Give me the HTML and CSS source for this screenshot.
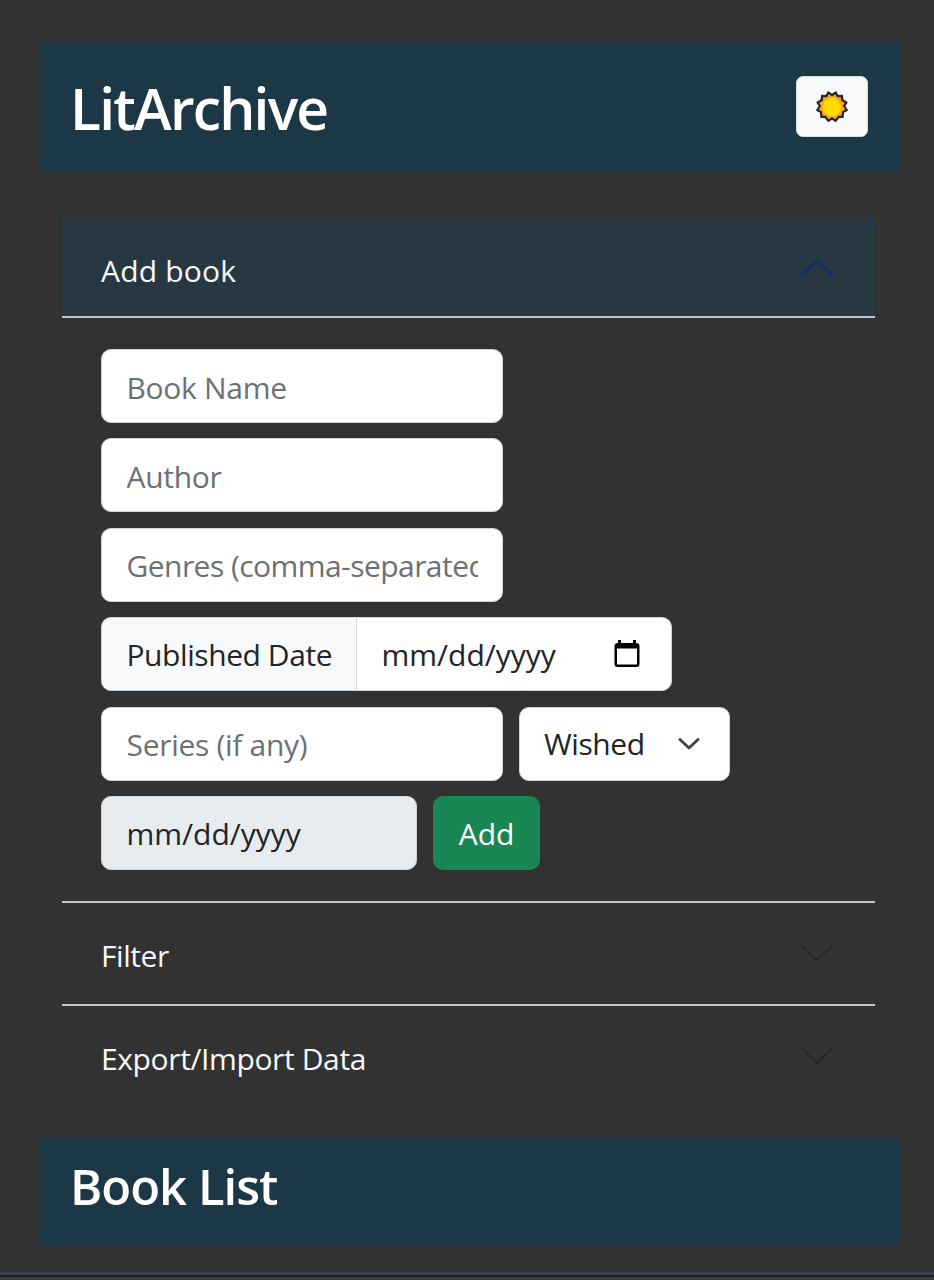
FILE: index.html
```html
<!DOCTYPE html>
<html lang="en">
<head>
<meta charset="utf-8">
<title>LitArchive</title>
<link rel="stylesheet" href="styles.css">
</head>
<body>
<div class="page">
  <header class="banner">
    <h1 class="brand">LitArchive</h1>
    <button class="theme" aria-label="Toggle theme">
      <svg width="34" height="34" viewBox="-17 -17 34 34"><path class="sun" d="M0-12L3.700-14.500L5.600-11L9.900-11.200L10.300-7L14.300-4.500L12.200-1L14.700 3L11 5.100L10.600 9.800L6.600 9.800L3.700 13.800L0 11.500L-3.700 13.800L-6.600 9.800L-10.600 9.800L-11 5.100L-14.700 3L-12.200-1L-14.300-4.500L-10.300-7L-9.900-11.200L-5.600-11L-3.700-14.500Z"/><circle class="disc" r="9.200"/></svg>
    </button>
  </header>
  <main class="accordion">
    <section class="item">
      <div class="head head-open"><span class="t-add">Add book</span>
        <svg class="chev" width="34" height="20" viewBox="0 0 34 20"><path class="up" d="M2 17L17 3L32 17"/></svg>
      </div>
      <form class="form">
        <div class="row"><input class="field t-name" placeholder="Book Name"></div>
        <div class="row"><input class="field t-author" placeholder="Author"></div>
        <div class="row"><input class="field t-genres" placeholder="Genres (comma-separated)"></div>
        <div class="row group">
          <span class="label">Published Date</span>
          <span class="date"><span>mm/dd/yyyy</span>
            <svg width="26" height="30" viewBox="0 0 26 30"><path d="M4 1h3v3h12V1h3v3q3.500 0 3.500 3v18q0 3-3 3h-19q-3 0-3-3V7q0-3 3.500-3zM3 9.500v16h20V9.500z" fill="#000" fill-rule="evenodd"/></svg>
          </span>
        </div>
        <div class="row"><input class="field t-series" placeholder="Series (if any)">
          <span class="select"><span class="t-wish">Wished</span>
            <svg width="22" height="14" viewBox="0 0 22 14"><path class="caret" d="M2 2.500L11 11L20 2.500"/></svg>
          </span>
        </div>
        <div class="row"><span class="disabled">mm/dd/yyyy</span><button class="add" type="button">Add</button></div>
      </form>
    </section>
    <section class="item">
      <div class="head"><span class="t-filter">Filter</span>
        <svg class="chev" width="34" height="20" viewBox="0 0 34 20"><path class="down" d="M2 3L17 17L32 3"/></svg>
      </div>
    </section>
    <section class="item">
      <div class="head"><span class="t-export">Export/Import Data</span>
        <svg class="chev" width="34" height="20" viewBox="0 0 34 20"><path class="down" d="M2 3L17 17L32 3"/></svg>
      </div>
    </section>
  </main>
  <section class="list"><h2 class="list-title">Book List</h2></section>
  <div class="edge"></div>
</div>
</body>
</html>
```
FILE: styles.css
```css
* { box-sizing: border-box; }
body { margin: 0; background: #323232; font: 30px/46px "Open Sans", sans-serif; color: #f8f9fa; }
svg { display: block; flex: none; }
span { white-space: nowrap; }
.page { height: 1280px; padding-top: 41px; overflow: hidden; display: flex; flex-direction: column; }
.banner { height: 130px; flex: none; margin: 0 35px 0 39px; padding: 0 31px 0 31px; background: #1c3745; display: flex; align-items: center; justify-content: space-between; }
.brand { margin: 4px 0 0; font-size: 57px; line-height: 68px; font-weight: 600; color: #fff; letter-spacing: -1.8px; }
.theme { width: 72px; height: 61px; padding: 2px 0 0; border: 1px solid #d5dadd; border-radius: 7px; background: #f8f9fa; display: flex; align-items: center; justify-content: center; }
.sun { fill: #f7a51c; stroke: #252525; stroke-width: 2.2; }
.disc { fill: #ffdc00; }
.accordion { margin: 47px 59px 0 62px; height: 872px; flex: none; }
.item + .item { border-top: 2px solid #c4c7c9; }
.head { height: 101px; padding: 5px 41px 0 39px; display: flex; align-items: center; justify-content: space-between; }
.head-open { height: 100px; padding-top: 8px; background: #273842; border-bottom: 2px solid #bfc7ce; }
.chev { margin-top: -7px; }
.up, .down, .caret { fill: none; stroke-linecap: round; stroke-linejoin: round; }
.up { stroke: #12315f; stroke-width: 3.5; }
.down { stroke: #252829; stroke-width: 2.2; }
.caret { stroke: #41464b; stroke-width: 3; }
.form { height: 583px; padding: 31px 39px 0; display: flex; flex-direction: column; gap: 15.4px; }
.row { display: flex; gap: 16px; height: 74px; }
.field, .group, .select, .disabled { border: 1px solid #cfd4d9; border-radius: 10px; background: #fff; color: #212529; }
.field { width: 402px; padding: 3px 24px 0 24.5px; font: inherit; }
.field::placeholder { color: #6c7075; opacity: 1; }
.group { width: 571px; gap: 0; overflow: hidden; }
.label { width: 255px; padding: 14px 0 0 24.5px; background: #f8f9fa; border-right: 1px solid #d9dde1; letter-spacing: -0.43px; }
.date { flex: 1; display: flex; align-items: center; justify-content: space-between; padding: 2px 31px 0 24.5px; }
.date svg { margin-top: -2px; }
.select { width: 211px; padding: 1px 29px 0 24px; display: flex; align-items: center; justify-content: space-between; }
.disabled { width: 316px; padding: 14px 0 0 24.5px; background: #e9ecef; }
.add { width: 107px; border: 0; border-radius: 10px; background: #198754; color: #fff; font: inherit; padding: 2px 0 0; }
.t-add { letter-spacing: 0.2px; }
.t-name { letter-spacing: -0.3px; }
.t-author { letter-spacing: -0.3px; }
.t-genres { letter-spacing: -0.55px; }
.t-series { letter-spacing: -0.3px; }
.t-wish { letter-spacing: -0.4px; }
.t-filter { letter-spacing: -0.45px; }
.t-export { letter-spacing: -0.38px; }
.list { height: 107px; flex: none; margin: 48px 35px 0 39px; padding: 18px 31px; background: #1c3745; }
.list-title { margin: 0; font-size: 49px; line-height: 60px; font-weight: 600; color: #fff; letter-spacing: -1px; }
.edge { flex: none; margin-top: 27px; height: 8px; border-top: 3px solid #334250; border-bottom: 3px solid #3c3b3e; background: #1e1e1e; }
```
